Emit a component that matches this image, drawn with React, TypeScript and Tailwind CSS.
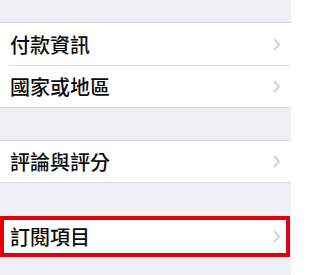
import React from "react";

function Chevron() {
  return (
    <svg width="8" height="13" viewBox="0 0 8 13" className="shrink-0">
      <path d="M1.5 1.5 L6 6.5 L1.5 11.5" fill="none" stroke="#c7c7cc" strokeWidth="1.6" strokeLinecap="round" strokeLinejoin="round" />
    </svg>
  );
}

const textCls = "text-[20px] leading-none font-medium text-[#0a0a0a]";

export default function App() {
  return (
    <div
      className="flex h-[275px] w-[291px] flex-col overflow-hidden bg-[#efeff4]"
      style={{ fontFamily: '"Noto Sans CJK TC", "Noto Sans CJK SC", sans-serif' }}
    >
      <div className="h-[22px]" />
      <div className="border-y border-[#d8d8dc]">
        <div className="relative flex h-[43px] items-center justify-between bg-white pl-[10px] pr-[10px]">
          <span className={textCls}>付款資訊</span>
          <Chevron />
          <div className="absolute bottom-0 left-[9px] right-0 h-px bg-[#dcdce0]" />
        </div>
        <div className="flex h-[41px] items-center justify-between bg-white pl-[10px] pr-[10px]">
          <span className={textCls}>國家或地區</span>
          <Chevron />
        </div>
      </div>
      <div className="h-[32px]" />
      <div className="border-y border-[#d8d8dc]">
        <div className="flex h-[41px] items-center justify-between bg-white pl-[10px] pr-[10px]">
          <span className={textCls}>評論與評分</span>
          <Chevron />
        </div>
      </div>
      <div className="h-[33px]" />
      <div className="mr-[1px] flex h-[41px] items-center justify-between border-[4px] border-[#e2000f] bg-white pl-[6px] pr-[5px]">
        <span className={textCls}>訂閱項目</span>
        <Chevron />
      </div>
    </div>
  );
}
